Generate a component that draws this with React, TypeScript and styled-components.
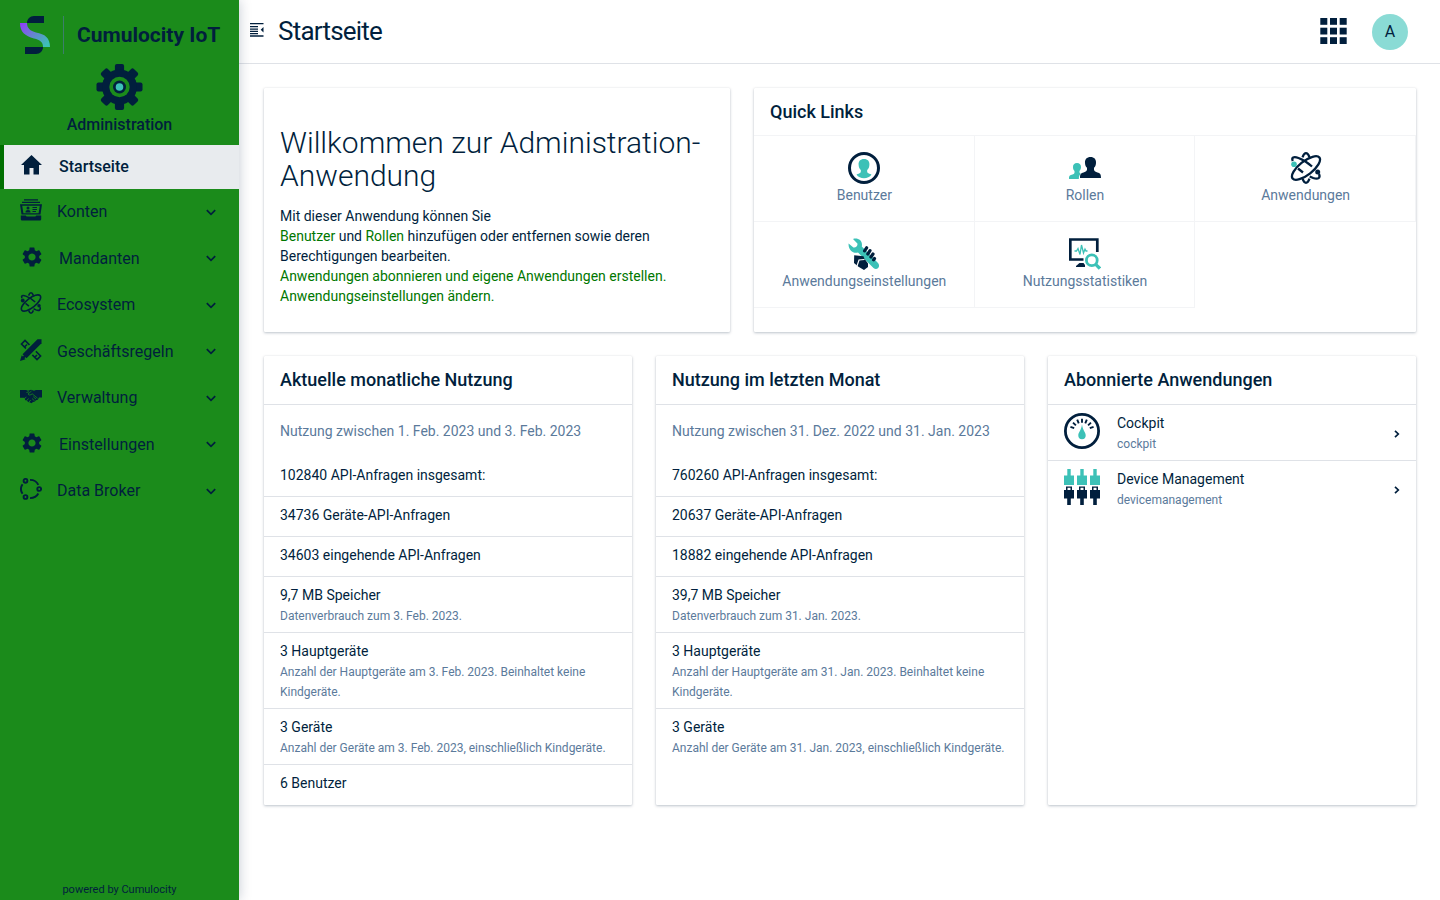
import React from "react";
import styled, { createGlobalStyle, css } from "styled-components";
import { MdSettings } from "react-icons/md";

const navy = "#011f3d";
const teal = "#3cc1b7";
const green = "#1b8b1b";
const muted = "#5b7a9b";
const line = "#dfe2e7";
const faint = "#f3f4f6";

const GlobalStyle = createGlobalStyle`
  *, *::before, *::after { box-sizing: border-box; }
  body {
    margin: 0;
    background: #fff;
    color: ${navy};
    font: 14px/20px Roboto, "Liberation Sans", sans-serif;
  }
  h1, h2, p, ul { margin: 0; padding: 0; }
  ul { list-style: none; }
  a { text-decoration: none; }
  svg { display: block; flex: none; }
`;

/* ---------- layout ---------- */
const Shell = styled.div`
  display: flex;
  min-height: 100vh;
`;

const Sidebar = styled.aside`
  display: flex;
  flex-direction: column;
  flex: none;
  width: 239px;
  background: ${green};
  box-shadow: 0 0 12px rgba(1, 31, 61, 0.24);
  z-index: 1;
`;

const Brand = styled.div`
  display: flex;
  align-items: center;
  padding: 16px 0 0 19px;
  height: 54px;
  font-size: 21px;
  font-weight: 700;
  white-space: nowrap;
`;

const BrandRule = styled.span`
  width: 1px;
  height: 38px;
  margin: 0 13px 0 12px;
  background: #3c7f6b;
`;

const AppBadge = styled.div`
  display: flex;
  flex-direction: column;
  align-items: center;
  gap: 5px;
  height: 91px;
  padding-top: 10px;
  font-size: 16px;
  font-weight: 500;
  line-height: 20px;
`;

const navEntry = css`
  display: flex;
  align-items: center;
  width: 100%;
  padding: 0 23px 0 16px;
  border: 0;
  border-left: 4px solid transparent;
  color: ${navy};
  font: 400 16px/20px Roboto, "Liberation Sans", sans-serif;
  text-align: left;
`;

const NavLink = styled.a`
  ${navEntry}
  height: 44px;
  border-left-color: #006f00;
  background: #e8ebee;
  font-weight: 500;
`;

const NavItem = styled.li`
  &:nth-child(even) > button { height: 47px; }
`;

const NavButton = styled.button`
  ${navEntry}
  height: 46px;
  background: none;
  cursor: pointer;
`;

const NavIcon = styled.span<{ $wide?: boolean }>`
  display: flex;
  justify-content: center;
  flex: none;
  width: ${(p) => (p.$wide ? 24 : 22)}px;
  margin-right: 15px;
  padding-right: ${(p) => (p.$wide ? 1 : 0)}px;
  padding-bottom: 4px;
`;

const NavLabel = styled.span`
  flex: 1;
`;

const Powered = styled.footer`
  margin-top: auto;
  font-size: 11px;
  text-align: center;
`;

const Main = styled.div`
  flex: 1;
  min-width: 0;
`;

const TopBar = styled.header`
  display: flex;
  align-items: center;
  height: 64px;
  padding: 0 32px 0 11px;
  border-bottom: 1px solid ${line};
`;

const PageTitle = styled.h1`
  flex: 1;
  margin-left: 14px;
  padding-bottom: 2px;
  font-size: 26px;
  font-weight: 400;
  line-height: 32px;
  letter-spacing: -0.03em;
`;

const IconButton = styled.button`
  display: flex;
  padding: 0;
  border: 0;
  background: none;
  cursor: pointer;
`;

const MenuToggle = styled(IconButton)`
  padding-bottom: 4px;
`;

const Avatar = styled.button`
  width: 36px;
  height: 36px;
  margin-left: 25px;
  padding: 0;
  border: 0;
  border-radius: 50%;
  background: #8adbd5;
  color: ${navy};
  font: 400 16px/36px Roboto, "Liberation Sans", sans-serif;
  cursor: pointer;
`;

const Dashboard = styled.main`
  display: grid;
  grid-template-columns: repeat(12, minmax(0, 1fr));
  gap: 24px;
  padding: 24px 24px 24px 25px;
`;

const Card = styled.section<{ $span: number }>`
  grid-column: span ${(p) => p.$span};
  background: #fff;
  border-radius: 1px;
  box-shadow: 0 1px 3px rgba(1, 31, 61, 0.26), 0 0 1px rgba(1, 31, 61, 0.12);
`;

const CardTitle = styled.h2<{ $faint?: boolean }>`
  padding: 14px 16px ${(p) => (p.$faint ? 13 : 14)}px;
  border-bottom: 1px solid ${(p) => (p.$faint ? faint : line)};
  font-size: 18px;
  font-weight: 500;
  line-height: 20px;
`;

/* ---------- welcome ---------- */
const Welcome = styled(Card)`
  padding: 38px 16px 26px;
`;

const WelcomeTitle = styled.h2`
  margin-bottom: 14px;
  font-size: 30px;
  font-weight: 300;
  line-height: 33px;
`;

const TextLink = styled.a`
  color: #007700;
`;

/* ---------- quick links ---------- */
const QuickGrid = styled.ul`
  display: grid;
  grid-template-columns: repeat(3, minmax(0, 1fr));
`;

const QuickItem = styled.li`
  box-shadow: inset -1px -1px 0 ${faint};
`;

const QuickLink = styled.a`
  display: flex;
  flex-direction: column;
  align-items: center;
  gap: 1px;
  padding: 16px 0 17px;
  color: ${muted};
`;

/* ---------- lists ---------- */
const Period = styled.p`
  padding: 16px;
  color: ${muted};
`;

const UsageItem = styled.li<{ $plain: boolean }>`
  padding: 8px 16px ${(p) => (p.$plain ? 11 : 6)}px;
  & + & { border-top: 1px solid ${line}; }
  &:last-child { padding-bottom: 12px; }
`;

const Note = styled.small`
  display: block;
  margin-top: 1px;
  color: ${muted};
  font-size: 12px;
`;

const AppItem = styled.li`
  & + & { border-top: 1px solid ${line}; }
`;

const AppLink = styled.a`
  display: flex;
  align-items: flex-start;
  padding: 8px 16px 6px;
  color: ${navy};
`;

const AppText = styled.span`
  flex: 1;
  margin-left: 17px;
`;

const AppArrow = styled.span`
  align-self: center;
`;

/* ---------- drawings ---------- */
const Logo = () => (
  <svg width="32" height="38" viewBox="0 0 32 38" aria-hidden="true">
    <defs>
      <linearGradient id="swoosh" x1="0" y1="0" x2="1" y2="0.8">
        <stop offset="0" stopColor="#9339ff" />
        <stop offset="0.5" stopColor="#6684cf" />
        <stop offset="1" stopColor="#3cc1b7" />
      </linearGradient>
    </defs>
    <path d="M25 0v7H8C8 3 11 0 15 0z" fill={navy} />
    <path d="M6 38v-7h18c0 4-3 7-7 7z" fill={navy} />
    <path d="M1 7h7c0 5 3 8 9 9.500C26 18 31 22 31 31h-7c0-5-3-7-9-8.500C6 20 1 16 1 7z" fill="url(#swoosh)" />
  </svg>
);

const AdminGear = () => (
  <svg width="47" height="46" viewBox="-23.500 -23 47 46" aria-hidden="true">
    <g fill={navy}>
      {[0, 45, 90, 135].map((a) => (
        <rect key={a} x="-4.600" y="-23" width="9.200" height="46" rx="2" transform={`rotate(${a})`} />
      ))}
      <circle r="17.500" />
    </g>
    <circle r="10.200" fill={green} />
    <circle r="6.500" fill={navy} />
    <circle r="3.800" fill={teal} />
  </svg>
);

const Home = () => (
  <svg width="21" height="20" viewBox="0 0 21 20" fill={navy} aria-hidden="true">
    <path d="M10.500 0L21 10h-3v9.500h-5.500V13h-4v6.500H3V10H0z" />
  </svg>
);

const Accounts = () => (
  <svg width="22" height="22" viewBox="0 0 22 22" fill={navy} aria-hidden="true">
    <path d="M4 .3h14v1.300H4zM2 2.700h18V4H2z" />
    <path fillRule="evenodd" d="M0 5.200h22l-1.500 10.300H1.500zM2.200 6.700l1.200 7.500h15.200l1.200-7.500z" />
    <circle cx="8" cy="9" r="1.500" />
    <path d="M5.500 13.500c0-2 1-2.600 2.500-2.600s2.500.6 2.500 2.600zM12.500 8h4.500v1h-4.500zM12.500 10h4.500v1h-4.500zM12.500 12h3.500v1h-3.500z" />
    <path d="M.8 16.500h5l.8 1h8.800l.8-1h5V20c0 1-.7 1.500-1.500 1.500H2.300C1.500 21.500.8 21 .8 20z" />
  </svg>
);

const Atom = ({ size, dot = navy }: { size: number; dot?: string }) => (
  <svg width={size} height={size} viewBox="0 0 32 32" fill="none" stroke={navy} strokeWidth="2.300" aria-hidden="true">
    <ellipse cx="16" cy="16" rx="17" ry="6.800" transform="rotate(-38 16 16)" />
    <path d="M2.800 9C1.200 5.500 3.500 4.200 8.500 6c5 1.800 9.500 4.800 13.500 8.500M29 22c1.700 4-.8 5.800-5.800 4l-3.500-1.500M8 16.500l5 4" />
    <path d="M12.500 5.300C14.500-.2 17.500-.2 19.500 5.300M12.500 26.700c2 5.500 5 5.500 7 0" />
    <circle cx="4" cy="12.300" r="2.800" fill={dot} stroke="none" />
    <circle cx="27.700" cy="20" r="2.500" fill={navy} stroke="none" />
  </svg>
);

const Design = () => (
  <svg width="22" height="22" viewBox="0 0 22 22" aria-hidden="true">
    <path d="M1.500 5L5 1.500 20.500 17 17 20.500zM5 7.500L7 5.500M15 18l2-2" fill="none" stroke={navy} strokeWidth="1.700" />
    <path d="M17.500.2h4v4L5.500 20.500.2 21.800l1.300-5.300z" fill={navy} stroke={green} strokeWidth="3.400" />
    <path d="M17.500.2h4v4L6.500 19.300l-4-4z" fill={navy} />
    <path d="M1.700 16.300l3.900 3.900L0 22z" fill={navy} />
  </svg>
);

const Handshake = () => (
  <svg width="22" height="15" viewBox="0 0 22 15" aria-hidden="true">
    <path
      d="M0 1h6l2 .8L11 .7l3 1L16 1h6v7.500h-3l-1.200 2.300-1.800.4-1.500 1.600-1.500.2-1.500 1.200-2-.9-1.500-.3-1-1.400-1.700-.4L4.500 8.700H0z"
      fill={navy}
    />
    <path
      d="M6.500 3.500L9 2.700M11.500 2L8 5c.7 1.600 2.600 1.200 4.200-.2l5.300 4.400M6.800 11.500l1.700-2M9 13l1.700-2M12 9.500l2.500 2.300M13.300 7.700l2.700 2.300M4.500 9.800l1.800-2"
      fill="none"
      stroke={green}
      strokeWidth=".8"
    />
  </svg>
);

const Broker = () => (
  <svg width="22" height="22" viewBox="0 0 22 22" fill="none" stroke={navy} strokeWidth="1.900" aria-hidden="true">
    <circle cx="5.500" cy="2.800" r="1.900" />
    <circle cx="19.200" cy="11" r="1.900" />
    <circle cx="5.500" cy="19" r="1.900" />
    <path d="M10 1.900c4 0 7 2 8.300 5M18.300 15.500c-1.500 3-4.500 4.600-8.300 4.600M2.500 6.300c-2 3-2 6.500 0 9.500" />
  </svg>
);

const Chevron = ({ right }: { right?: boolean }) => (
  <svg width={right ? 6 : 10} height={right ? 8 : 7} viewBox={right ? "0 0 6 8" : "0 0 10 7"} fill="none" stroke={navy} strokeWidth="1.700" aria-hidden="true">
    <path d={right ? "M1 .8L4.300 4 1 7.200" : "M.8 1.200L5 5.400l4.200-4.200"} />
  </svg>
);

const Outdent = () => (
  <svg width="14" height="14" viewBox="0 0 14 14" fill={navy} aria-hidden="true">
    <path d="M0 0h13.500v1.300H0zM0 3h8v1.300H0zM0 5.400h8v1.300H0zM0 7.800h8v1.300H0zM0 10h8v1.200H0zM0 12.300h13.500v1.400H0zM13.500 4v5.400L10.700 6.700z" />
  </svg>
);

const Apps = () => (
  <svg width="27" height="27" viewBox="0 0 27 27" fill={navy} aria-hidden="true">
    {[0, 9.7, 19.2].map((y) => [0.3, 10, 19.7].map((x) => <rect key={`${x}-${y}`} x={x} y={y} width="7" height="6.800" />))}
  </svg>
);

const UserIcon = () => (
  <svg width="32" height="32" viewBox="0 0 32 32" aria-hidden="true">
    <circle cx="16" cy="16" r="14.500" fill="none" stroke={navy} strokeWidth="3" />
    <path d="M16 7c3.800 0 5.600 2.300 5.400 5.800-.1 2.400-1 4.200-2.200 5.200-.4 3 .8 3.300 4.300 4.500-1.500 2.500-4.500 3.700-7.500 3.700s-6-1.200-7.500-3.700c3.500-1.200 4.700-1.500 4.300-4.500-1.200-1-2.100-2.800-2.200-5.200C10.400 9.300 12.200 7 16 7z" fill={teal} />
  </svg>
);

const RolesIcon = () => (
  <svg width="32" height="32" viewBox="0 0 32 32" aria-hidden="true">
    <path d="M8 11c2.600 0 4.200 1.600 4 4.300-.1 1.800-.8 3-1.500 3.700-.3 1.700.2 2.300 1.500 2.800-1.500 1-2.200 2.500-2.200 5.200H0c0-3 .5-3.600 2.700-4.200 2.200-.5 3.200-1.300 2.800-3.800-.8-.7-1.500-1.900-1.500-3.700C3.800 12.600 5.400 11 8 11z" fill={teal} />
    <path d="M21.500 5c3.700 0 5.700 2.300 5.500 5.900-.1 2.200-.9 4-2 4.900-.4 3 .8 4 3.400 4.600 3 .7 3.600 1.800 3.600 5.600H11c0-3.800.6-4.900 3.600-5.600 2.600-.6 3.800-1.600 3.400-4.600-1.100-.9-1.900-2.700-2-4.900C15.800 7.300 17.800 5 21.500 5z" fill={navy} />
  </svg>
);

const WrenchIcon = () => (
  <svg width="32" height="32" viewBox="0 0 32 32" aria-hidden="true">
    <path d="M5 1c5-1.500 10 1.500 8.800 7.500L30 25c3 3.500-1 8-4.500 5L10 14.500C5 16 0 11.500.6 5.500l4.800 4c2.500.5 4.500-1.500 4-4z" fill={teal} />
    <g stroke={navy} strokeWidth="3.200" strokeLinecap="round">
      <path d="M16.600 12.800l2-3M19.800 16l2.200-3.300M22.900 19l2.100-3M25.600 21.800l.9-1.300" />
    </g>
    <path d="M6.200 17.200l9.300 1 .8 2.300 3.700 5V29l-4 3-5.500-3.200L6 25z" fill={navy} />
    <path d="M16.500 21.500l-5.500.5-2 6" fill="none" stroke="#fff" strokeWidth="1.200" />
  </svg>
);

const StatsIcon = () => (
  <svg width="32" height="32" viewBox="0 0 32 32" fill="none" aria-hidden="true">
    <path d="M14.500 21.500H1.300V1.500h27V14" stroke={navy} strokeWidth="2.700" />
    <path d="M10.500 25h4l1.500 2v2H7v-1z" fill={navy} />
    <path d="M5.500 13h2l1.500-2.500 2 6L12.500 7l2 8 1.500-4 1 2h1.500" stroke={teal} strokeWidth="1.300" />
    <circle cx="22.800" cy="22.300" r="5.400" stroke={teal} strokeWidth="2.800" />
    <path d="M26.700 26.300l4.200 4.200" stroke={teal} strokeWidth="3.200" />
  </svg>
);

const CockpitIcon = () => (
  <svg width="36" height="36" viewBox="-18 -18 36 36" aria-hidden="true">
    <circle r="16.600" fill="none" stroke={navy} strokeWidth="2.800" />
    {[-70, -47, -23, 0, 23, 47, 70].map((a) => (
      <path key={a} d="M0-12.300v4" stroke={navy} strokeWidth="1.900" transform={`rotate(${a})`} />
    ))}
    <path d="M0-6.500C1 0 3.700 1.300 3.700 4.500a3.700 3.700 0 0 1-7.400 0C-3.700 1.300-1 0 0-6.500z" fill={teal} />
  </svg>
);

const DevicesIcon = () => (
  <svg width="36" height="36" viewBox="0 0 36 36" aria-hidden="true">
    {[0, 13, 26].map((x) => (
      <g key={x} transform={`translate(${x} 0)`}>
        <path d="M3.300 0h3.400v6.500H10V16H0V6.500h3.300z" fill={teal} />
        <path fillRule="evenodd" d="M2 17.500h6V21h2v8.500H6.800V36H3.200v-6.500H0V21h2zm1.500 1.300V21h3v-2.200z" fill={navy} />
      </g>
    ))}
  </svg>
);

/* ---------- content ---------- */
const navItems = [
  { label: "Konten", icon: <Accounts /> },
  { label: "Mandanten", icon: <MdSettings size={24} />, wide: true },
  { label: "Ecosystem", icon: <Atom size={22} /> },
  { label: "Geschäftsregeln", icon: <Design /> },
  { label: "Verwaltung", icon: <Handshake /> },
  { label: "Einstellungen", icon: <MdSettings size={24} />, wide: true },
  { label: "Data Broker", icon: <Broker /> },
];

const quickLinks = [
  { label: "Benutzer", icon: <UserIcon /> },
  { label: "Rollen", icon: <RolesIcon /> },
  { label: "Anwendungen", icon: <Atom size={32} dot={teal} /> },
  { label: "Anwendungseinstellungen", icon: <WrenchIcon /> },
  { label: "Nutzungsstatistiken", icon: <StatsIcon /> },
];

type Entry = { text: string; note?: string };

const currentMonth: Entry[] = [
  { text: "102840 API-Anfragen insgesamt:" },
  { text: "34736 Geräte-API-Anfragen" },
  { text: "34603 eingehende API-Anfragen" },
  { text: "9,7 MB Speicher", note: "Datenverbrauch zum 3. Feb. 2023." },
  { text: "3 Hauptgeräte", note: "Anzahl der Hauptgeräte am 3. Feb. 2023. Beinhaltet keine Kindgeräte." },
  { text: "3 Geräte", note: "Anzahl der Geräte am 3. Feb. 2023, einschließlich Kindgeräte." },
  { text: "6 Benutzer" },
];

const lastMonth: Entry[] = [
  { text: "760260 API-Anfragen insgesamt:" },
  { text: "20637 Geräte-API-Anfragen" },
  { text: "18882 eingehende API-Anfragen" },
  { text: "39,7 MB Speicher", note: "Datenverbrauch zum 31. Jan. 2023." },
  { text: "3 Hauptgeräte", note: "Anzahl der Hauptgeräte am 31. Jan. 2023. Beinhaltet keine Kindgeräte." },
  { text: "3 Geräte", note: "Anzahl der Geräte am 31. Jan. 2023, einschließlich Kindgeräte." },
];

const apps = [
  { name: "Cockpit", path: "cockpit", icon: <CockpitIcon /> },
  { name: "Device Management", path: "devicemanagement", icon: <DevicesIcon /> },
];

const UsageCard = ({ title, period, entries }: { title: string; period: string; entries: Entry[] }) => (
  <Card $span={4}>
    <CardTitle>{title}</CardTitle>
    <Period>{period}</Period>
    <ul>
      {entries.map((e) => (
        <UsageItem key={e.text} $plain={!e.note}>
          {e.text}
          {e.note && <Note>{e.note}</Note>}
        </UsageItem>
      ))}
    </ul>
  </Card>
);

export default function App() {
  return (
    <>
      <GlobalStyle />
      <Shell>
        <Sidebar>
          <Brand>
            <Logo />
            <BrandRule />
            Cumulocity IoT
          </Brand>
          <AppBadge>
            <AdminGear />
            Administration
          </AppBadge>
          <nav>
            <NavLink href="#start" aria-current="page">
              <NavIcon $wide><Home /></NavIcon>
              <NavLabel>Startseite</NavLabel>
            </NavLink>
            <ul>
              {navItems.map((n) => (
                <NavItem key={n.label}>
                  <NavButton type="button" aria-expanded="false">
                    <NavIcon $wide={n.wide}>{n.icon}</NavIcon>
                    <NavLabel>{n.label}</NavLabel>
                    <Chevron />
                  </NavButton>
                </NavItem>
              ))}
            </ul>
          </nav>
          <Powered>powered by Cumulocity</Powered>
        </Sidebar>
        <Main>
          <TopBar>
            <MenuToggle type="button" aria-label="Navigation umschalten"><Outdent /></MenuToggle>
            <PageTitle>Startseite</PageTitle>
            <IconButton type="button" aria-label="Anwendungsumschalter"><Apps /></IconButton>
            <Avatar type="button">A</Avatar>
          </TopBar>
          <Dashboard>
            <Welcome $span={5}>
              <WelcomeTitle>Willkommen zur Administration-Anwendung</WelcomeTitle>
              <p>
                Mit dieser Anwendung können Sie
                <br />
                <TextLink href="#users">Benutzer</TextLink> und <TextLink href="#roles">Rollen</TextLink> hinzufügen
                oder entfernen sowie deren Berechtigungen bearbeiten.
                <br />
                <TextLink href="#apps">Anwendungen abonnieren und eigene Anwendungen erstellen.</TextLink>
                <br />
                <TextLink href="#settings">Anwendungseinstellungen ändern.</TextLink>
              </p>
            </Welcome>
            <Card $span={7}>
              <CardTitle $faint>Quick Links</CardTitle>
              <QuickGrid>
                {quickLinks.map((q) => (
                  <QuickItem key={q.label}>
                    <QuickLink href={`#${q.label}`}>
                      {q.icon}
                      {q.label}
                    </QuickLink>
                  </QuickItem>
                ))}
              </QuickGrid>
            </Card>
            <UsageCard
              title="Aktuelle monatliche Nutzung"
              period="Nutzung zwischen 1. Feb. 2023 und 3. Feb. 2023"
              entries={currentMonth}
            />
            <UsageCard
              title="Nutzung im letzten Monat"
              period="Nutzung zwischen 31. Dez. 2022 und 31. Jan. 2023"
              entries={lastMonth}
            />
            <Card $span={4}>
              <CardTitle>Abonnierte Anwendungen</CardTitle>
              <ul>
                {apps.map((a) => (
                  <AppItem key={a.name}>
                    <AppLink href={`#${a.path}`}>
                      {a.icon}
                      <AppText>
                        {a.name}
                        <Note>{a.path}</Note>
                      </AppText>
                      <AppArrow><Chevron right /></AppArrow>
                    </AppLink>
                  </AppItem>
                ))}
              </ul>
            </Card>
          </Dashboard>
        </Main>
      </Shell>
    </>
  );
}
